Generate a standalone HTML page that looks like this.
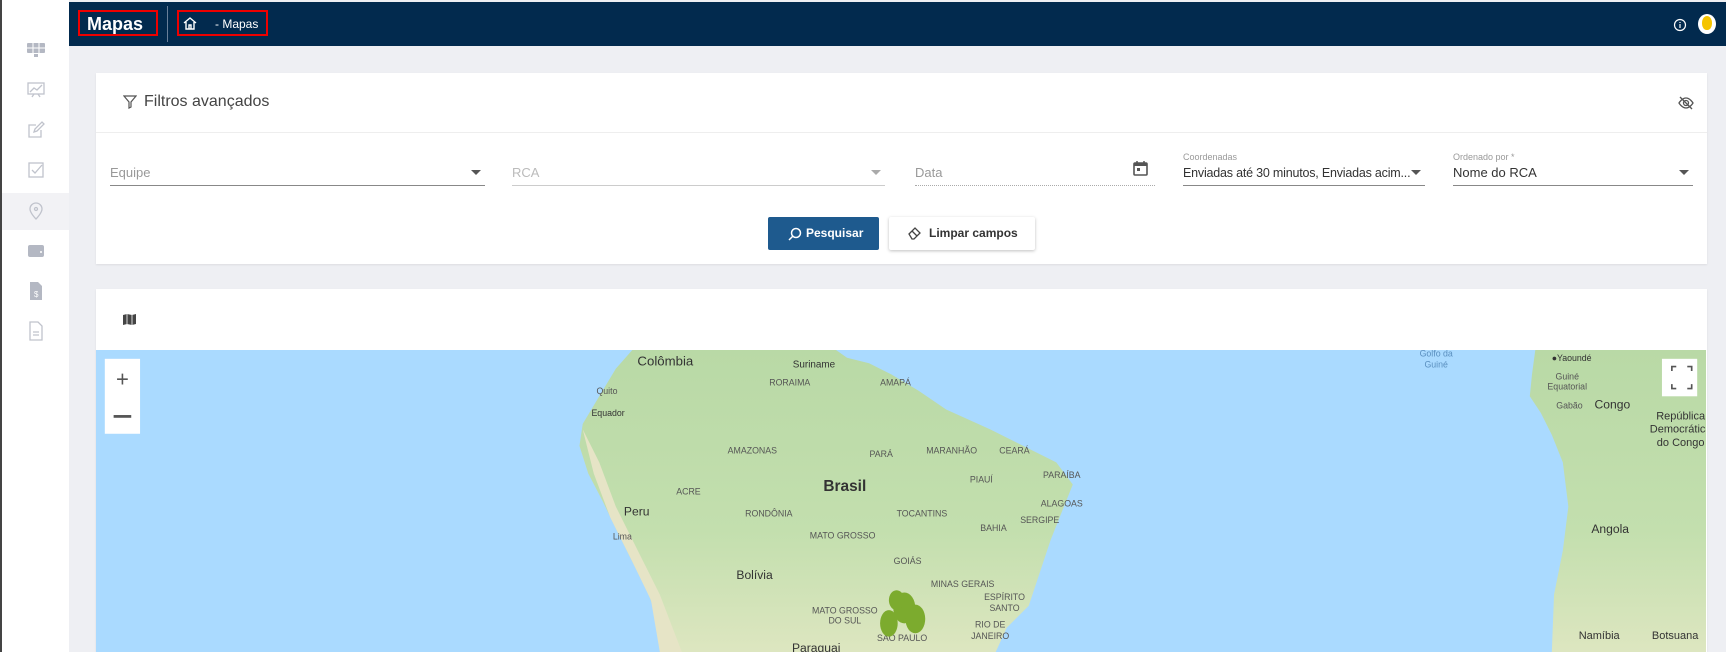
<!DOCTYPE html>
<html><head><meta charset="utf-8"><style>
*{margin:0;padding:0;box-sizing:border-box}
body{width:1726px;height:652px;overflow:hidden;background:#eeeff3;font-family:"Liberation Sans",sans-serif;position:relative}
.abs{position:absolute;white-space:nowrap}
.sb{left:0;top:0;width:69px;height:652px;background:#fff;border-left:2px solid #444}
.top{left:69px;top:2px;width:1657px;height:44px;background:#022a4e}
.ic{position:absolute;left:24px;width:20px;height:20px}
.card{background:#fff;box-shadow:0 1px 2px rgba(0,0,0,.08)}
.fld{position:absolute;top:160px;border-bottom:1px solid #888;height:26px;font-size:13px;color:#444;white-space:nowrap}
.fld span{position:absolute;bottom:5px;left:0}
.arr{position:absolute;right:4px;bottom:10px;width:0;height:0;border-left:5px solid transparent;border-right:5px solid transparent;border-top:5px solid #555}
.lab{position:absolute;font-size:9px;color:#999}
</style></head><body>
<div class="abs sb">
 <div class="abs" style="left:0;top:193px;width:67px;height:37px;background:#f2f2f5"></div>
 <svg class="ic" style="top:40px" viewBox="0 0 20 20"><rect x="1" y="3" width="18" height="10" rx="1" fill="#b4b8c3"/><path d="M1 8h18M7 3v10M13 3v10" stroke="#fff"/><rect x="8" y="14" width="4" height="3" fill="#b4b8c3"/></svg>
 <svg class="ic" style="top:80px" viewBox="0 0 20 20" fill="none" stroke="#c0c3cc" stroke-width="1.3"><rect x="2" y="3" width="16" height="11"/><path d="M4 12l4-4 3 2 5-5M6 17l2-3M14 17l-2-3"/></svg>
 <svg class="ic" style="top:120px" viewBox="0 0 20 20" fill="none" stroke="#c0c3cc" stroke-width="1.3"><path d="M15 10v7H3V5h7"/><path d="M8 12l1-3 7-7 2 2-7 7z"/></svg>
 <svg class="ic" style="top:160px" viewBox="0 0 20 20" fill="none" stroke="#c0c3cc" stroke-width="1.3"><rect x="3" y="3" width="14" height="14"/><path d="M6 10l3 3 7-8"/></svg>
 <svg class="ic" style="top:201px" viewBox="0 0 20 20" fill="none" stroke="#c0c3cc" stroke-width="1.3"><path d="M10 18s-6-6-6-10a6 6 0 0112 0c0 4-6 10-6 10z"/><circle cx="10" cy="8" r="1.5"/></svg>
 <svg class="ic" style="top:241px" viewBox="0 0 20 20"><rect x="2" y="4" width="16" height="12" rx="2" fill="#b4b8c3"/><circle cx="15" cy="11" r="1" fill="#fff"/></svg>
 <svg class="ic" style="top:281px" viewBox="0 0 20 20"><path d="M4 1h8l4 4v14H4z" fill="#b4b8c3"/><text x="8" y="16" font-size="8" fill="#fff">$</text></svg>
 <svg class="ic" style="top:321px" viewBox="0 0 20 20" fill="none" stroke="#c0c3cc" stroke-width="1.3"><path d="M4 1h8l4 4v14H4zM7 11h6M7 14h6"/></svg>
</div>
<div class="abs top">
 <div class="abs" style="left:9px;top:8px;width:80px;height:26px;border:2px solid #e00"></div>
 <div class="abs" style="left:18px;top:12px;color:#fff;font-weight:bold;font-size:18px">Mapas</div>
 <div class="abs" style="left:98px;top:4px;width:1px;height:36px;background:#6a7f99"></div>
 <div class="abs" style="left:108px;top:8px;width:91px;height:26px;border:2px solid #e00"></div>
 <svg class="abs" style="left:113px;top:13px" width="16" height="16" viewBox="0 0 16 16" fill="none" stroke="#fff" stroke-width="1.4"><path d="M2 8l6-5 6 5M4 7v7h8V7M7 14v-4h2v4"/></svg>
 <div class="abs" style="left:146px;top:15px;color:#fff;font-size:12px">- Mapas</div>
 <svg class="abs" style="left:1604px;top:16px" width="14" height="14" viewBox="0 0 14 14" fill="none" stroke="#fff" stroke-width="1.2"><circle cx="7" cy="7" r="5.5"/><path d="M7 6v4M7 4v1"/></svg>
 <div class="abs" style="left:1629px;top:12px;width:18px;height:20px;border-radius:50%;background:#fff"></div>
 <div class="abs" style="left:1633px;top:14px;width:10px;height:14px;border-radius:50% 50% 45% 45%;background:#f5c400"></div>
</div>

<div class="abs card" style="left:96px;top:73px;width:1611px;height:191px">
 <svg class="abs" style="left:27px;top:22px" width="14" height="14" viewBox="0 0 14 14" fill="none" stroke="#555" stroke-width="1.2"><path d="M1 1h12L8 7v5L6 13V7z"/></svg>
 <div class="abs" style="left:48px;top:20px;font-size:16px;color:#444">Filtros avançados</div>
 <svg class="abs" style="left:1582px;top:22px" width="16" height="16" viewBox="0 0 16 16" fill="none" stroke="#555" stroke-width="1.3"><path d="M1 8s3-5 7-5 7 5 7 5-3 5-7 5-7-5-7-5z"/><circle cx="8" cy="8" r="2.5"/><path d="M2 2l12 12"/></svg>
 <div class="abs" style="left:0;top:59px;width:1611px;height:1px;background:#eee"></div>
</div>
<div class="fld" style="left:110px;width:375px"><span style="color:#999">Equipe</span><div class="arr"></div></div>
<div class="fld" style="left:512px;width:373px;border-color:#ccc"><span style="color:#bbb">RCA</span><div class="arr" style="border-top-color:#aaa"></div></div>
<div class="fld" style="left:915px;width:240px;border-bottom:1px dotted #aaa"><span style="color:#999">Data</span></div>
<svg class="abs" style="left:1133px;top:160px" width="15" height="16" viewBox="0 0 15 16"><rect x="1" y="3" width="13" height="12" rx="1" fill="none" stroke="#555" stroke-width="1.6"/><rect x="1" y="3" width="13" height="3" fill="#555"/><rect x="4" y="8" width="3" height="3" fill="#555"/><path d="M4 1v3M11 1v3" stroke="#555" stroke-width="1.5"/></svg>
<div class="lab" style="left:1183px;top:152px">Coordenadas</div>
<div class="fld" style="left:1183px;width:242px"><span style="color:#333;font-size:12.5px;letter-spacing:-0.2px">Enviadas até 30 minutos, Enviadas acim...</span><div class="arr"></div></div>
<div class="lab" style="left:1453px;top:152px">Ordenado por *</div>
<div class="fld" style="left:1453px;width:240px"><span style="color:#333">Nome do RCA</span><div class="arr"></div></div>
<div class="abs" style="left:768px;top:217px;width:111px;height:33px;background:#1e5a8e;border-radius:2px;color:#fff;font-size:12px;font-weight:bold;line-height:33px;padding-left:38px">Pesquisar</div>
<svg class="abs" style="left:788px;top:227px" width="14" height="14" viewBox="0 0 14 14" fill="none" stroke="#fff" stroke-width="1.5"><circle cx="8" cy="6" r="4.5"/><path d="M5 9l-4 4"/></svg>
<div class="abs" style="left:889px;top:217px;width:146px;height:33px;background:#fff;border-radius:2px;box-shadow:0 1px 3px rgba(0,0,0,.25);color:#333;font-size:12px;font-weight:bold;line-height:33px;padding-left:40px">Limpar campos</div>
<svg class="abs" style="left:908px;top:226px" width="14" height="14" viewBox="0 0 14 14" fill="none" stroke="#444" stroke-width="1.3"><path d="M1 8l6-6 5 5-6 6H4z M4 5l5 5"/></svg>

<div class="abs card" style="left:96px;top:289px;width:1611px;height:363px"></div>
<svg class="abs" style="left:122px;top:313px" width="15" height="13" viewBox="0 0 15 13"><path d="M1 2l4-1 5 1 4-1v10l-4 1-5-1-4 1z" fill="#444"/><path d="M5 1v10M10 2v10" stroke="#fff" stroke-width="0.8"/></svg>

<svg class="abs" style="left:96px;top:350px" width="1610" height="302" viewBox="88 318 1462 274" preserveAspectRatio="none">
 <defs><linearGradient id="g" x1="0" y1="0" x2="0" y2="1"><stop offset="0" stop-color="#b9d9a6"/><stop offset="0.6" stop-color="#c3dfae"/><stop offset="1" stop-color="#dde6c0"/></linearGradient></defs>
 <rect x="88" y="318" width="1462" height="274" fill="#aadaff"/>
 <path d="M575 318L560 335 545 360 530 385 527 405 535 430 548 455 560 480 575 510 590 540 600 570 605 592 905 592 915 570 935 550 945 520 955 490 965 465 975 440 960 420 930 405 900 390 860 372 835 355 810 340 790 330 770 325 760 318Z" fill="url(#g)"/>
 <path d="M530 390 540 430 555 470 575 510 592 545 600 592 620 592 600 540 580 500 560 460 545 420Z" fill="#e6e4c6"/>
 <path d="M1395 318L1392 340 1390 360 1400 375 1410 395 1420 420 1425 460 1420 500 1412 540 1410 592 1550 592 1550 318Z" fill="url(#g)"/>
 <g font-family="Liberation Sans,sans-serif" fill="#555" font-size="8" text-anchor="middle">
  <text x="605" y="332" font-size="12" fill="#333">Colômbia</text>
  <text x="740" y="334" font-size="9" fill="#333">Suriname</text>
  <text x="718" y="350">RORAIMA</text><text x="814" y="350">AMAPÁ</text>
  <text x="552" y="358">Quito</text><text x="553" y="378" fill="#333">Equador</text>
  <text x="684" y="412">AMAZONAS</text><text x="801" y="415">PARÁ</text><text x="865" y="412">MARANHÃO</text><text x="922" y="412">CEARÁ</text>
  <text x="768" y="446" font-size="14" font-weight="bold" fill="#333">Brasil</text>
  <text x="626" y="449">ACRE</text><text x="892" y="438">PIAUÍ</text><text x="965" y="434">PARAÍBA</text><text x="965" y="460">ALAGOAS</text>
  <text x="579" y="468" font-size="11" fill="#333">Peru</text><text x="566" y="490">Lima</text>
  <text x="699" y="469">RONDÔNIA</text><text x="838" y="469">TOCANTINS</text><text x="945" y="475">SERGIPE</text><text x="903" y="482">BAHIA</text>
  <text x="766" y="489">MATO GROSSO</text><text x="825" y="512">GOIÁS</text>
  <text x="686" y="526" font-size="11" fill="#333">Bolívia</text>
  <text x="875" y="533">MINAS GERAIS</text><text x="913" y="545">ESPÍRITO</text><text x="913" y="555">SANTO</text>
  <text x="768" y="557">MATO GROSSO</text><text x="768" y="566">DO SUL</text><text x="900" y="570">RIO DE</text><text x="900" y="580">JANEIRO</text>
  <text x="820" y="582">SÃO PAULO</text><text x="742" y="592" font-size="11" fill="#333">Paraguai</text>
  <text x="1305" y="324" fill="#5a8fbf">Golfo da</text><text x="1305" y="334" fill="#5a8fbf">Guiné</text>
  <text x="1428" y="328" fill="#333">●Yaoundé</text><text x="1424" y="345">Guiné</text><text x="1424" y="354">Equatorial</text>
  <text x="1426" y="371">Gabão</text><text x="1465" y="371" font-size="11" fill="#333">Congo</text>
  <text x="1527" y="381" font-size="10" fill="#333">República</text><text x="1527" y="393" font-size="10" fill="#333">Democrática</text><text x="1527" y="405" font-size="10" fill="#333">do Congo</text>
  <text x="1463" y="484" font-size="11" fill="#333">Angola</text><text x="1453" y="580" font-size="10" fill="#333">Namíbia</text><text x="1522" y="580" font-size="10" fill="#333">Botsuana</text>
 </g>
 <g fill="#7cab2e"><ellipse cx="822" cy="552" rx="10" ry="14"/><ellipse cx="808" cy="566" rx="8" ry="12"/><ellipse cx="832" cy="562" rx="9" ry="13"/><ellipse cx="815" cy="545" rx="7" ry="9"/></g>
 <rect x="96" y="326" width="32" height="68" fill="#fff"/>
 <text x="112" y="351" font-size="20" text-anchor="middle" fill="#555" font-family="Liberation Sans,sans-serif">+</text>
 <rect x="104" y="377" width="16" height="2.5" fill="#555"/>
 <rect x="1510" y="326" width="32" height="34" fill="#fff"/>
 <path d="M1519 337v-4h4M1533 333h4v4M1537 349v4h-4M1523 353h-4v-4" fill="none" stroke="#555" stroke-width="1.5"/>
</svg>
</body></html>
